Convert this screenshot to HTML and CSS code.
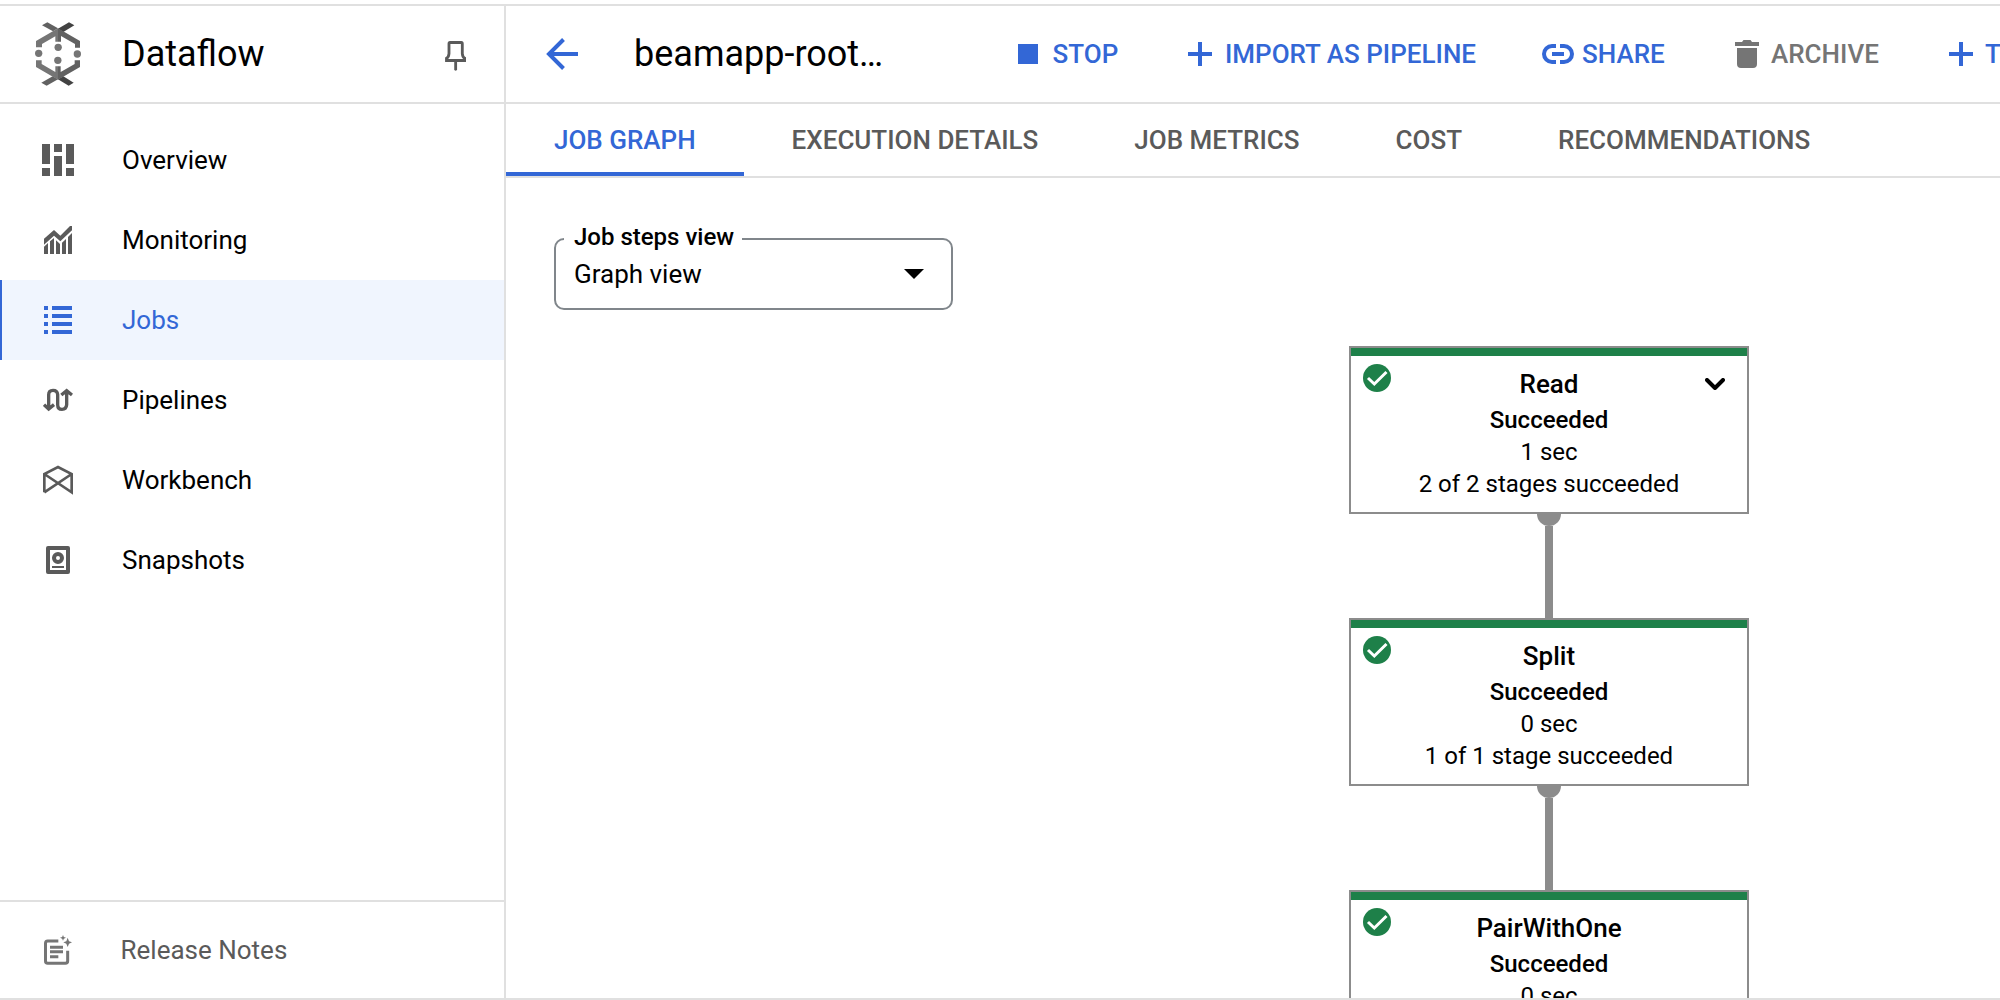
FILE: index.html
```html
<!DOCTYPE html>
<html lang="en">
<head>
<meta charset="utf-8">
<title>Dataflow</title>
<link rel="stylesheet" href="styles.css">
</head>
<body>
<div class="app">
  <aside class="sidebar">
    <header class="brand">
      <svg class="brand-logo" viewBox="105 66 138 192" width="46" height="64" aria-hidden="true">
        <path fill="#616161" d="M126 76 142 67 174 85 159 94Z"/>
        <path fill="#424242" d="M223 76 207 67 174 86 190 96Z"/>
        <path fill="#757575" d="M108 142V123L174 85V125H166V109L126 132V142Z"/>
        <path fill="#616161" d="M174 85 240 123V143H225V132L183 108V125H174Z"/>
        <path fill="#616161" d="M124 248 140 257 174 238 158 229Z"/>
        <path fill="#424242" d="M221 248 206 257 174 238 190 229Z"/>
        <path fill="#757575" d="M108 181H125V192L166 216V199H174V239L108 201Z"/>
        <path fill="#616161" d="M240 181H224V192L182 216V199H174V239L240 201Z"/>
        <g fill="#757575"><circle cx="116" cy="160" r="11"/><circle cx="232" cy="162" r="11"/><circle cx="174.500" cy="142" r="11"/><circle cx="173.500" cy="181" r="11"/></g>
      </svg>
      <span class="brand-name">Dataflow</span>
      <svg class="pin" viewBox="0 0 64 90" width="21.3" height="30" fill="none" stroke="#5a5a5a" stroke-width="8.500" aria-hidden="true">
        <path d="M12 8Q12 4.500 15 4.500H49Q52 4.500 52 8V38Q53 49 59.500 52V58.500H4.500V52Q11 49 12 38Z"/>
        <path d="M32 60V85" stroke-linecap="round"/>
      </svg>
    </header>
    <nav class="nav">
      <a class="nav-item">
        <span class="nav-icon"><svg viewBox="0 0 32 32" width="32" height="32"><path d="M0 0h8v20H0zM0 24h8v8H0zM12 0h8v8h-8zM12 12h8v20h-8zM24 0h8v20h-8zM24 24h8v8h-8z"/></svg></span>
        <span>Overview</span>
      </a>
      <a class="nav-item">
        <span class="nav-icon"><svg viewBox="0 0 84 84" width="28" height="28"><path d="M0 38 30 12 49 29 78 0H84V13L49 46 30 29 0 56ZM0 62 12 51V84H0ZM18 46 30 36V84H18ZM36 43 48 54V84H36ZM54 50 66 39V84H54ZM72 33 84 21V84H72Z"/></svg></span>
        <span>Monitoring</span>
      </a>
      <a class="nav-item nav-item-active">
        <span class="nav-icon"><svg viewBox="0 0 28 28" width="28" height="28"><path d="M0 0h4v4H0zM0 8h4v4H0zM0 16h4v4H0zM0 24h4v4H0zM8 0h20v4H8zM8 8h20v4H8zM8 16h20v4H8zM8 24h20v4H8z"/></svg></span>
        <span>Jobs</span>
      </a>
      <a class="nav-item">
        <span class="nav-icon"><svg viewBox="0 0 90 72" width="30" height="24"><path d="M17 62V20Q17 7 30 7T44 20V50Q44 64 57 64T71 50V9M3 50 17 63 33 50M55 21 71 8 87 21" fill="none" stroke="#5a5a5a" stroke-width="10"/></svg></span>
        <span>Pipelines</span>
      </a>
      <a class="nav-item">
        <span class="nav-icon"><svg viewBox="0 0 90 90" width="30" height="30"><path d="M4 82V27L45 6 86 27V82L4 27M86 27 4 82" fill="none" stroke="#5a5a5a" stroke-width="8"/></svg></span>
        <span>Workbench</span>
      </a>
      <a class="nav-item">
        <span class="nav-icon"><svg viewBox="0 0 72 84" width="24" height="28"><path fill-rule="evenodd" d="M6 0H66Q72 0 72 6V78Q72 84 66 84H6Q0 84 0 78V6Q0 0 6 0ZM12 12V72H60V12ZM36 18A18 18 0 1 1 36 54A18 18 0 1 1 36 18ZM36 30A6 6 0 1 0 36 42A6 6 0 1 0 36 30ZM18 60H54V66H18Z"/></svg></span>
        <span>Snapshots</span>
      </a>
    </nav>
    <a class="release">
      <svg class="release-icon" viewBox="0 0 84 90" width="28" height="30" aria-hidden="true">
        <path d="M43 18H11Q4.500 18 4.500 25V78Q4.500 85 11 85H64Q71 85 71 78V47" fill="none" stroke="#757575" stroke-width="9"/>
        <path fill="#757575" d="M18 32H57V41H18ZM18 46H57V55H18ZM18 61H43V70H18ZM71 8 75 19 84 22 75 26 71 36 67 26 58 22 67 19ZM57 0 59.500 6 66 8 59.500 11 57 17 54.500 11 48 8 54.500 6Z"/>
      </svg>
      <span>Release Notes</span>
    </a>
  </aside>

  <main class="main">
    <header class="toolbar">
      <svg class="back" viewBox="0 0 32 32" width="32" height="32" fill="none" stroke="#3367d6" stroke-width="4" aria-label="Back"><path d="M32 16H3M17.500 1.500 3 16 17.500 30.500"/></svg>
      <h1 class="job-name">beamapp-root…</h1>
      <button class="action action-stop"><svg viewBox="0 0 20 20" width="20" height="20"><path d="M0 0h20v20H0z"/></svg>STOP</button>
      <button class="action action-import"><svg viewBox="0 0 24 24" width="24" height="24"><path d="M10 0h4v10h10v4H14v10h-4V14H0v-4h10z"/></svg>IMPORT AS PIPELINE</button>
      <button class="action action-share"><svg viewBox="0 0 32 20" width="32" height="20"><path d="M14 0H10A10 10 0 0 0 10 20H14V16H10A6 6 0 0 1 10 4H14ZM18 0H22A10 10 0 0 1 22 20H18V16H22A6 6 0 0 0 22 4H18ZM10 8H22V12H10Z"/></svg>SHARE</button>
      <button class="action action-archive"><svg viewBox="0 0 24 28" width="24" height="28"><path d="M0 2H7L8.500 0H15.500L17 2H24V6H0ZM2 8H22V24Q22 28 18 28H6Q2 28 2 24Z"/></svg>ARCHIVE</button>
      <button class="action action-more"><svg viewBox="0 0 24 24" width="24" height="24"><path d="M10 0h4v10h10v4H14v10h-4V14H0v-4h10z"/></svg>T</button>
    </header>
    <nav class="tabs">
      <a class="tab tab-active">JOB GRAPH</a>
      <a class="tab">EXECUTION DETAILS</a>
      <a class="tab">JOB METRICS</a>
      <a class="tab">COST</a>
      <a class="tab">RECOMMENDATIONS</a>
    </nav>
    <section class="canvas">
      <div class="select">
        <span class="select-label">Job steps view</span>
        <span>Graph view</span>
        <svg viewBox="0 0 20 10" width="20" height="10" aria-hidden="true"><path d="M0 0H20L10 10Z"/></svg>
      </div>
      <div class="graph">
        <article class="node">
          <svg class="node-check" viewBox="0 0 28 28" width="28" height="28"><circle cx="14" cy="14" r="14"/><path d="M5 14 11.300 20 23.500 8"/></svg>
          <h2 class="node-name">Read</h2>
          <svg class="node-toggle" viewBox="0 0 20 12" width="20" height="12"><path d="M2 2 10 10 18 2"/></svg>
          <p class="node-state">Succeeded</p>
          <p>1 sec</p>
          <p>2 of 2 stages succeeded</p>
        </article>
        <div class="edge"></div>
        <article class="node">
          <svg class="node-check" viewBox="0 0 28 28" width="28" height="28"><circle cx="14" cy="14" r="14"/><path d="M5 14 11.300 20 23.500 8"/></svg>
          <h2 class="node-name">Split</h2>
          <p class="node-state">Succeeded</p>
          <p>0 sec</p>
          <p>1 of 1 stage succeeded</p>
        </article>
        <div class="edge"></div>
        <article class="node">
          <svg class="node-check" viewBox="0 0 28 28" width="28" height="28"><circle cx="14" cy="14" r="14"/><path d="M5 14 11.300 20 23.500 8"/></svg>
          <h2 class="node-name">PairWithOne</h2>
          <p class="node-state">Succeeded</p>
          <p>0 sec</p>
        </article>
      </div>
    </section>
  </main>
</div>
</body>
</html>
```
FILE: styles.css
```css
* { box-sizing: border-box; }

body {
  margin: 0;
  background: #fff;
  color: #000;
  font: 400 26px/36px Roboto, sans-serif;
}

svg { display: block; flex: none; }
h1, h2, p { margin: 0; font-weight: 400; }

.app {
  display: flex;
  height: 1000px;
  margin: 0;
  padding-top: 4px;
  overflow: hidden;
}

/* Sidebar */
.sidebar {
  display: flex;
  flex-direction: column;
  flex: none;
  width: 506px;
  border-top: 2px solid #e0e0e0;
  border-right: 2px solid #e0e0e0;
  border-bottom: 2px solid #e0e0e0;
}

.brand {
  display: flex;
  align-items: center;
  flex: none;
  height: 98px;
  padding: 0 38px 0 35px;
  border-bottom: 2px solid #e0e0e0;
}

.brand-name {
  flex: 1;
  margin-left: 41px;
  font-size: 36px;
}

.pin { margin-top: 4px; }

.nav {
  display: flex;
  flex-direction: column;
  flex: 1;
  padding-top: 16px;
}

.nav-item {
  display: flex;
  align-items: center;
  height: 80px;
  padding-left: 38px;
}

.nav-icon {
  display: flex;
  justify-content: center;
  width: 40px;
  margin-right: 44px;
  fill: #5a5a5a;
}

.nav-item-active {
  padding-left: 36px;
  border-left: 2px solid #3367d6;
  background: #f0f5fe;
  color: #3367d6;
}

.nav-item-active .nav-icon { fill: #3367d6; }

.release {
  display: flex;
  align-items: center;
  flex: none;
  height: 98px;
  padding-left: 44px;
  gap: 48.5px;
  border-top: 2px solid #e0e0e0;
  color: #5a5a5a;
}

/* Main column */
.main {
  display: flex;
  flex-direction: column;
  flex: 1;
  min-width: 0;
  overflow: hidden;
  border-top: 2px solid #e0e0e0;
  border-bottom: 2px solid #e0e0e0;
}

.toolbar {
  display: flex;
  align-items: center;
  flex: none;
  height: 98px;
  padding-left: 40px;
  border-bottom: 2px solid #e0e0e0;
}

.job-name {
  flex: none;
  width: 384px;
  margin-left: 56px;
  font-size: 36px;
  line-height: 48px;
}

.action {
  display: flex;
  align-items: center;
  flex: none;
  padding: 0;
  border: 0;
  background: none;
  color: #3367d6;
  fill: #3367d6;
  font: 500 26px/36px Roboto, sans-serif;
  white-space: nowrap;
}

.action-stop { gap: 14.5px; width: 170px; }
.action-import { gap: 13px; width: 354px; }
.action-share { gap: 8px; width: 193px; }
.action-archive { gap: 12px; width: 214px; color: #757575; fill: #757575; }
.action-more { gap: 12px; }

.tabs {
  display: flex;
  flex: none;
  height: 74px;
  border-bottom: 2px solid #e0e0e0;
}

.tab {
  height: 72px;
  padding: 0 48px;
  color: #5a5a5a;
  font-weight: 500;
  line-height: 72px;
  white-space: nowrap;
}

.tab-active {
  color: #3367d6;
  box-shadow: inset 0 -4px #3367d6;
}

/* Job graph */
.canvas {
  flex: 1;
  min-height: 0;
  padding: 60px 0 0 48px;
  overflow: hidden;
}

.select {
  position: relative;
  display: flex;
  align-items: center;
  justify-content: space-between;
  width: 399px;
  height: 72px;
  padding: 0 27px 0 18px;
  border: 2px solid #80868b;
  border-radius: 10px;
}

.select-label {
  position: absolute;
  top: -19px;
  left: 8px;
  padding: 0 8px 0 10px;
  background: #fff;
  font-size: 24px;
  font-weight: 500;
  line-height: 32px;
}

.graph {
  display: flex;
  flex-direction: column;
  align-items: center;
  width: 400px;
  margin: 36px 0 0 795px;
}

.node {
  position: relative;
  flex: none;
  width: 400px;
  height: 168px;
  padding-top: 18px;
  border: 2px solid #8c8c8c;
  background: linear-gradient(#1e8049 8px, #fff 8px);
  font-size: 24px;
  line-height: 32px;
  text-align: center;
}

.node-name {
  margin-bottom: 2px;
  font-size: 26px;
  font-weight: 500;
  line-height: 36px;
}

.node-state { font-weight: 500; }

.node-check {
  position: absolute;
  top: 16px;
  left: 12px;
  fill: #1e8049;
}

.node-check path {
  fill: none;
  stroke: #fff;
  stroke-width: 3;
}

.node-toggle {
  position: absolute;
  top: 30px;
  right: 22px;
  fill: none;
  stroke: #000;
  stroke-width: 4;
  stroke-linecap: round;
  stroke-linejoin: round;
}

.edge {
  display: flex;
  flex-direction: column;
  align-items: center;
  flex: none;
  width: 24px;
  height: 104px;
}

.edge::before {
  content: "";
  width: 24px;
  height: 12px;
  border-radius: 0 0 12px 12px;
  background: #8c8c8c;
}

.edge::after {
  content: "";
  width: 8px;
  height: 92px;
  background: #8c8c8c;
}
```
